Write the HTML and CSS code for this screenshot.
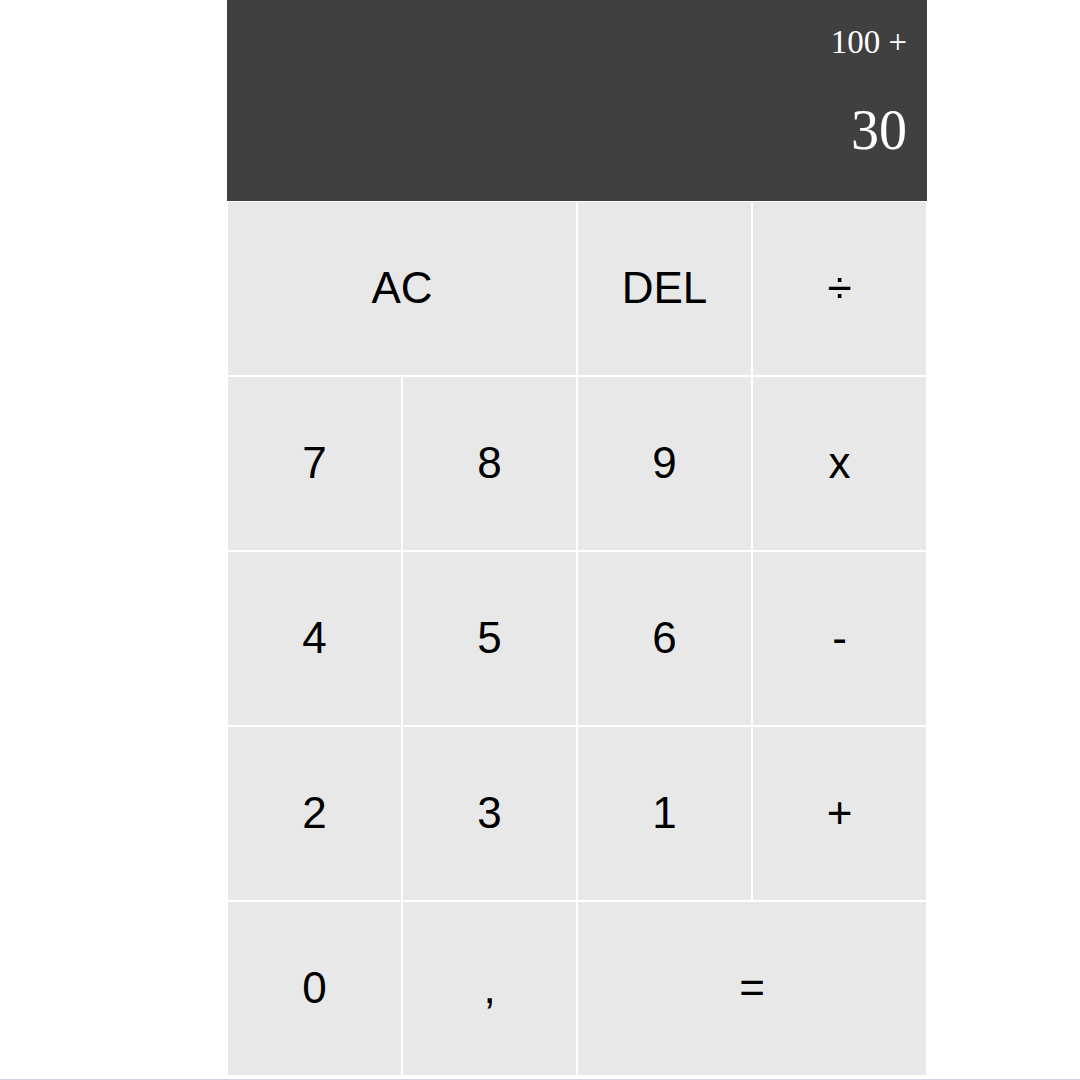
FILE: index.html
```html
<!DOCTYPE html>
<html lang="en">
<head>
<meta charset="utf-8">
<title>Calculator</title>
<link rel="stylesheet" href="styles.css">
</head>
<body>
<div class="page">
  <div class="calculator">
    <div class="output">
      <div class="previous">100 +</div>
      <div class="current">30</div>
    </div>
    <button class="key span-two">AC</button>
    <button class="key">DEL</button>
    <button class="key">÷</button>
    <button class="key">7</button>
    <button class="key">8</button>
    <button class="key">9</button>
    <button class="key">x</button>
    <button class="key">4</button>
    <button class="key">5</button>
    <button class="key">6</button>
    <button class="key">-</button>
    <button class="key">2</button>
    <button class="key">3</button>
    <button class="key">1</button>
    <button class="key">+</button>
    <button class="key">0</button>
    <button class="key">,</button>
    <button class="key span-two">=</button>
  </div>
</div>
</body>
</html>
```

FILE: styles.css
```css
html, body {
  margin: 0;
  padding: 0;
  background: #ffffff;
}

.page {
  min-height: 1079px;
  border-bottom: 1px solid #cfd2f0;
}

.calculator {
  display: grid;
  grid-template-columns: repeat(4, 175px);
  grid-template-rows: 201px repeat(5, 175px);
  margin-left: 227px;
  width: 700px;
}

.output {
  grid-column: 1 / -1;
  background-color: rgba(0, 0, 0, 0.75);
  display: flex;
  flex-direction: column;
  align-items: flex-end;
  padding: 26px 20px 0 0;
  box-sizing: border-box;
  font-family: "Liberation Serif", "Times New Roman", serif;
  color: #ffffff;
}

.previous {
  font-size: 33px;
  line-height: 1;
}

.current {
  font-size: 56px;
  line-height: 1;
  margin-top: 43px;
}

.key {
  font-family: "Liberation Sans", Arial, sans-serif;
  font-size: 44px;
  color: #000000;
  background-color: #e8e8e8;
  border: 1px solid #ffffff;
  outline: none;
  padding: 0 0 2px 0;
  margin: 0;
  cursor: pointer;
}

.span-two {
  grid-column: span 2;
}
```
